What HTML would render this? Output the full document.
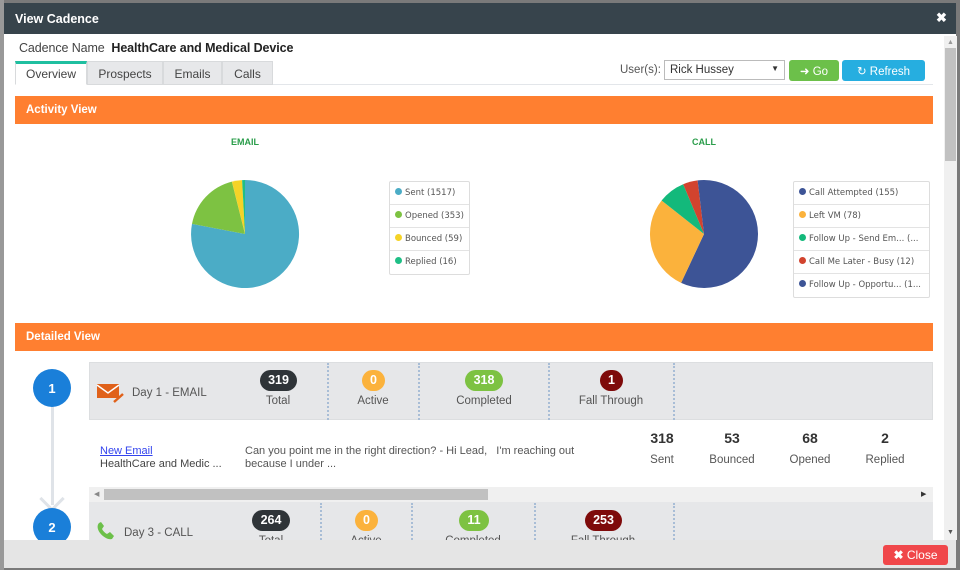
<!DOCTYPE html>
<html><head><meta charset="utf-8"><style>
*{margin:0;padding:0;box-sizing:border-box}
body{width:960px;height:570px;overflow:hidden;background:#7a7a7a;font-family:"Liberation Sans",sans-serif;position:relative;font-size:12px;color:#333}
.a{position:absolute}
.modal{left:4px;top:3px;width:952px;height:565px;background:#fff}
.hdr{left:4px;top:3px;width:952px;height:31px;background:#37444c;color:#fff;font-weight:bold;font-size:12.5px;padding:9px 0 0 11px}
.tab{top:61px;height:24px;background:#e7e8ea;border:1px solid #d8dadc;font-size:12px;color:#444;text-align:center;padding-top:5px}
.bar{left:15px;width:918px;height:28px;background:#ff7f30;color:#fff;font-weight:bold;font-size:11.5px;padding:8px 0 0 11px}
.leg{background:#fff;border:1px solid #ddd;border-radius:2px;font-family:"DejaVu Sans",sans-serif;font-size:8.5px;color:#555}
.leg div{height:23px;border-bottom:1px solid #e3e3e3;padding:6px 0 0 5px;white-space:nowrap}
.leg div:last-child{border:0}
.dot{display:inline-block;width:7px;height:7px;border-radius:50%;margin-right:3px;vertical-align:-0px}
.badge{color:#fff;font-weight:bold;font-size:12.5px;text-align:center;border-radius:12px;height:21px;padding-top:3px}
.lab{font-size:11.5px;color:#555;text-align:center;width:120px}
.dv{width:0;border-left:2px dotted #a8bdd6}
.circ{width:38px;height:38px;border-radius:50%;background:#1a7fd9;color:#fff;font-weight:bold;font-size:13px;text-align:center;padding-top:12px}
.num{font-size:14px;font-weight:bold;color:#333;text-align:center;width:80px}
.sl{font-size:11.5px;color:#555;text-align:center;width:80px}
</style></head><body>
<div class="a" style="left:0;top:0;width:4px;height:570px;background:#999"></div>
<div class="a modal"></div>
<div class="a hdr">View Cadence</div>
<div class="a" style="left:936px;top:10px;color:#fff;font-weight:bold;font-size:13px">✖</div>
<div class="a" style="left:19px;top:41px;font-size:12.5px;color:#444;letter-spacing:-0.1px">Cadence Name&nbsp; <b style="color:#222">HealthCare and Medical Device</b></div>
<div class="a" style="left:15px;top:84px;width:918px;height:1px;background:#e3e6ea"></div>
<div class="a tab" style="left:15px;width:72px;background:#fff;border-bottom-color:#fff;border-top:3px solid #1fbfa0;padding-top:3px">Overview</div>
<div class="a tab" style="left:87px;width:76px">Prospects</div>
<div class="a tab" style="left:163px;width:59px">Emails</div>
<div class="a tab" style="left:222px;width:51px">Calls</div>
<div class="a" style="left:620px;top:64px;font-size:11.5px;color:#555">User(s):</div>
<div class="a" style="left:664px;top:60px;width:121px;height:20px;border:1px solid #bbb;font-size:11.5px;padding:3px 0 0 5px;color:#333">Rick Hussey<span style="position:absolute;right:5px;top:3px;font-size:8px">▼</span></div>
<div class="a" style="left:789px;top:60px;width:50px;height:21px;background:#6cc04a;border-radius:3px;color:#fff;font-size:11.5px;text-align:center;padding-top:4px">➜ Go</div>
<div class="a" style="left:842px;top:60px;width:83px;height:21px;background:#26aee0;border-radius:3px;color:#fff;font-size:11.5px;text-align:center;padding-top:4px">↻ Refresh</div>
<div class="a" style="left:944px;top:36px;width:13px;height:504px;background:#f0f0f0"></div>
<div class="a" style="left:945px;top:48px;width:11px;height:113px;background:#c1c1c1"></div>
<div class="a" style="left:947px;top:39px;font-size:7px;color:#999">▲</div>
<div class="a" style="left:947px;top:529px;font-size:7px;color:#555">▼</div>

<div class="a bar" style="top:96px">Activity View</div>
<div class="a" style="left:231px;top:137px;font-size:9px;font-weight:bold;color:#2a9d4a">EMAIL</div>
<div class="a" style="left:692px;top:137px;font-size:9px;font-weight:bold;color:#2a9d4a">CALL</div>
<svg class="a" style="left:0;top:0" width="960" height="320">
<path d="M245 234 L245 180 A54 54 0 1 1 192 223.9Z" fill="#4bacc6"/>
<path d="M245 234 L192 223.9 A54 54 0 0 1 231.9 181.6Z" fill="#7dc242"/>
<path d="M245 234 L231.9 181.6 A54 54 0 0 1 242.1 180.1Z" fill="#f5d327"/>
<path d="M245 234 L242.1 180.1 A54 54 0 0 1 245 180Z" fill="#1fbf86"/>
<path d="M704 234 L704 180 A54 54 0 1 1 681.1 282.9Z" fill="#3d5496"/>
<path d="M704 234 L681.1 282.9 A54 54 0 0 1 661.6 200.5Z" fill="#fbb23c"/>
<path d="M704 234 L661.6 200.5 A54 54 0 0 1 683.2 184.2Z" fill="#13b97b"/>
<path d="M704 234 L683.2 184.2 A54 54 0 0 1 697.6 180.4Z" fill="#d2432e"/>
<path d="M704 234 L697.6 180.4 A54 54 0 0 1 704 180Z" fill="#3d5496"/>
</svg>
<div class="a leg" style="left:389px;top:181px;width:81px">
<div><span class="dot" style="background:#4bacc6"></span>Sent (1517)</div>
<div><span class="dot" style="background:#7dc242"></span>Opened (353)</div>
<div><span class="dot" style="background:#f5d327"></span>Bounced (59)</div>
<div><span class="dot" style="background:#1fbf86"></span>Replied (16)</div>
</div>
<div class="a leg" style="left:793px;top:181px;width:137px">
<div><span class="dot" style="background:#3d5496"></span>Call Attempted (155)</div>
<div><span class="dot" style="background:#fbb23c"></span>Left VM (78)</div>
<div><span class="dot" style="background:#13b97b"></span>Follow Up - Send Em... (...</div>
<div><span class="dot" style="background:#d2432e"></span>Call Me Later - Busy (12)</div>
<div><span class="dot" style="background:#3d5496"></span>Follow Up - Opportu... (1...</div>
</div>

<div class="a bar" style="top:323px">Detailed View</div>
<div class="a" style="left:51px;top:405px;width:3px;height:100px;background:#dfe3e8"></div>
<div class="a" style="left:43px;top:490px;width:18px;height:18px;border-right:3px solid #dfe3e8;border-bottom:3px solid #dfe3e8;transform:rotate(45deg)"></div>
<div class="a circ" style="left:33px;top:369px">1</div>
<div class="a circ" style="left:33px;top:508px">2</div>

<div class="a" style="left:89px;top:362px;width:844px;height:58px;background:#e6e7e9;border:1px solid #dcdee0"></div>
<div class="a" style="left:89px;top:420px;width:844px;height:67px;background:#fff"></div>
<div class="a" style="left:89px;top:487px;width:844px;height:15px;background:#f0f0f0"></div>
<div class="a" style="left:104px;top:489px;width:384px;height:11px;background:#c1c1c1"></div>
<div class="a" style="left:94px;top:490px;font-size:7px;color:#888">◀</div>
<div class="a" style="left:921px;top:490px;font-size:7px;color:#333">▶</div>
<div class="a" style="left:89px;top:502px;width:844px;height:38px;background:#e6e7e9"></div>

<svg class="a" style="left:96px;top:382px" width="30" height="22"><rect x="1" y="2" width="22" height="14" fill="#e0611a"/><path d="M1 3 L12 11 L23 3" stroke="#fff" stroke-width="1.5" fill="none"/><path d="M18 20 L27 12" stroke="#e0611a" stroke-width="2.5"/></svg>
<div class="a" style="left:132px;top:387px;font-size:11.5px;color:#555">Day 1 - EMAIL</div>
<div class="a badge" style="left:260px;top:370px;width:37px;background:#2f3438">319</div>
<div class="a lab" style="left:218px;top:395px">Total</div>
<div class="a badge" style="left:362px;top:370px;width:23px;background:#fbb23c">0</div>
<div class="a lab" style="left:313px;top:395px">Active</div>
<div class="a badge" style="left:465px;top:370px;width:38px;background:#7dc242">318</div>
<div class="a lab" style="left:424px;top:395px">Completed</div>
<div class="a badge" style="left:600px;top:370px;width:23px;background:#7e0a0a">1</div>
<div class="a lab" style="left:551px;top:395px">Fall Through</div>
<div class="a dv" style="left:327px;top:363px;height:57px"></div>
<div class="a dv" style="left:418px;top:363px;height:57px"></div>
<div class="a dv" style="left:548px;top:363px;height:57px"></div>
<div class="a dv" style="left:673px;top:363px;height:57px"></div>

<div class="a" style="left:100px;top:445px;font-size:11px;color:#3344ee;text-decoration:underline">New Email</div>
<div class="a" style="left:100px;top:458px;font-size:11px;color:#444">HealthCare and Medic ...</div>
<div class="a" style="left:245px;top:445px;font-size:11px;color:#555;width:360px;line-height:13px">Can you point me in the right direction? - Hi Lead,&nbsp;&nbsp; I'm reaching out because I under ...</div>
<div class="a num" style="left:622px;top:430px">318</div><div class="a sl" style="left:622px;top:454px">Sent</div>
<div class="a num" style="left:692px;top:430px">53</div><div class="a sl" style="left:692px;top:454px">Bounced</div>
<div class="a num" style="left:770px;top:430px">68</div><div class="a sl" style="left:770px;top:454px">Opened</div>
<div class="a num" style="left:845px;top:430px">2</div><div class="a sl" style="left:845px;top:454px">Replied</div>

<svg class="a" style="left:96px;top:521px" width="22" height="20"><path d="M3 2 C1 4 1 8 4 12 C8 17 13 19 16 18 L18 15 L14 11 L11 13 C9 12 7 10 6 8 L8 5 L5 1 Z" fill="#6cc04a"/></svg>
<div class="a" style="left:124px;top:527px;font-size:11.5px;color:#555">Day 3 - CALL</div>
<div class="a badge" style="left:252px;top:510px;width:38px;background:#2f3438">264</div>
<div class="a lab" style="left:211px;top:535px">Total</div>
<div class="a badge" style="left:355px;top:510px;width:23px;background:#fbb23c">0</div>
<div class="a lab" style="left:306px;top:535px">Active</div>
<div class="a badge" style="left:459px;top:510px;width:30px;background:#7dc242">11</div>
<div class="a lab" style="left:413px;top:535px">Completed</div>
<div class="a badge" style="left:585px;top:510px;width:37px;background:#7e0a0a">253</div>
<div class="a lab" style="left:543px;top:535px">Fall Through</div>
<div class="a dv" style="left:320px;top:503px;height:37px"></div>
<div class="a dv" style="left:411px;top:503px;height:37px"></div>
<div class="a dv" style="left:534px;top:503px;height:37px"></div>
<div class="a dv" style="left:673px;top:503px;height:37px"></div>

<div class="a" style="left:4px;top:540px;width:952px;height:28px;background:#e5e5e5"></div>
<div class="a" style="left:883px;top:545px;width:65px;height:20px;background:#f0474a;border-radius:3px;color:#fff;font-size:12px;text-align:center;padding-top:3px"><b>✖</b> Close</div>
</body></html>
